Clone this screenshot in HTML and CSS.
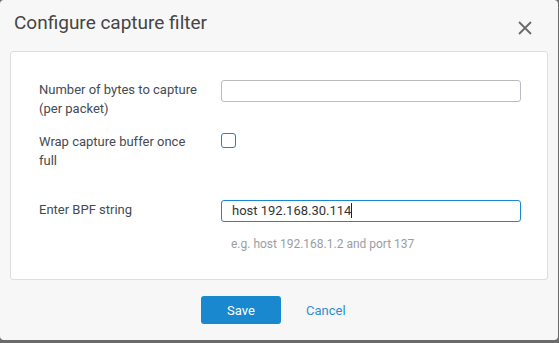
FILE: index.html
```html
<!DOCTYPE html>
<html lang="en">
<head>
  <meta charset="UTF-8">
  <title>Configure capture filter</title>
  <link rel="stylesheet" href="styles.css">
</head>
<body>
  <div class="dialog">
    <div class="dialog-header">
      <h2>Configure capture filter</h2>
      <button class="close-btn" aria-label="Close">
        <svg width="14" height="14" viewBox="0 0 14 14">
          <path d="M1 1 L13 13 M13 1 L1 13" stroke="#6a6a6a" stroke-width="1.8" fill="none"/>
        </svg>
      </button>
    </div>

    <div class="card">
      <div class="form-row">
        <label class="form-label" for="bytes">Number of bytes to capture (per packet)</label>
        <input type="text" id="bytes" class="text-input">
      </div>

      <div class="form-row row-wrap">
        <label class="form-label" for="wrap">Wrap capture buffer once full</label>
        <span class="checkbox" id="wrap"></span>
      </div>

      <div class="form-row row-bpf">
        <label class="form-label" for="bpf">Enter BPF string</label>
        <div class="text-input focused" id="bpf">host 192.168.30.114<span class="caret"></span></div>
      </div>
      <div class="hint">e.g. host 192.168.1.2 and port 137</div>
    </div>

    <div class="dialog-footer">
      <button class="btn-save">Save</button>
      <a href="#" class="btn-cancel">Cancel</a>
    </div>
  </div>
</body>
</html>
```

FILE: styles.css
```css
body {
  margin: 0;
  background-color: #6b6b6b;
  font-family: Roboto, "Liberation Sans", sans-serif;
  font-size: 13px;
  color: #444b53;
}
.dialog {
  width: 558px;
  height: 340px;
  background-color: #f7f7f7;
  border-radius: 4px;
  box-sizing: border-box;
}
.dialog-header {
  display: flex;
  justify-content: space-between;
  align-items: flex-start;
  height: 51px;
  padding: 0 26px 0 14px;
}
.dialog-header h2 {
  margin: 0;
  padding-top: 11px;
  font-size: 19px;
  font-weight: 400;
  color: #454545;
}
.close-btn {
  background: none;
  border: none;
  padding: 0;
  margin-top: 21px;
  cursor: pointer;
  line-height: 0;
}
.card {
  margin: 0 10px;
  padding: 28px 0 25px 28px;
  background-color: #fff;
  border: 1px solid #dedede;
  border-radius: 3px;
}
.form-row {
  display: flex;
  align-items: flex-start;
}
.form-label {
  width: 166px;
  margin-right: 16px;
  line-height: 19px;
}
.row-wrap {
  margin-top: 14px;
}
.row-bpf {
  margin-top: 30px;
}
.text-input {
  width: 300px;
  height: 22px;
  box-sizing: border-box;
  border: 1px solid #b9bdc3;
  border-radius: 3px;
  padding: 0 10px;
  font-family: inherit;
  font-size: 13px;
  color: #333;
  line-height: 20px;
}
.text-input.focused {
  border-color: #1a88cf;
}
.caret {
  display: inline-block;
  width: 1px;
  height: 15px;
  background-color: #222;
  vertical-align: -3px;
}
.checkbox {
  display: block;
  width: 15px;
  height: 15px;
  box-sizing: border-box;
  border: 1.5px solid #1a88cf;
  border-radius: 3px;
  margin-top: 1px;
}
.hint {
  margin: 13px 0 0 192px;
  line-height: 19px;
  font-size: 12px;
  color: #9a9ea3;
}
.dialog-footer {
  display: flex;
  align-items: center;
  padding: 16px 0 0 201px;
}
.btn-save {
  width: 80px;
  height: 28px;
  background-color: #1a88cf;
  color: #fff;
  border: none;
  border-radius: 3px;
  font-family: inherit;
  font-size: 13px;
  cursor: pointer;
}
.btn-cancel {
  margin-left: 25px;
  color: #2f8fd0;
  text-decoration: none;
}
```
